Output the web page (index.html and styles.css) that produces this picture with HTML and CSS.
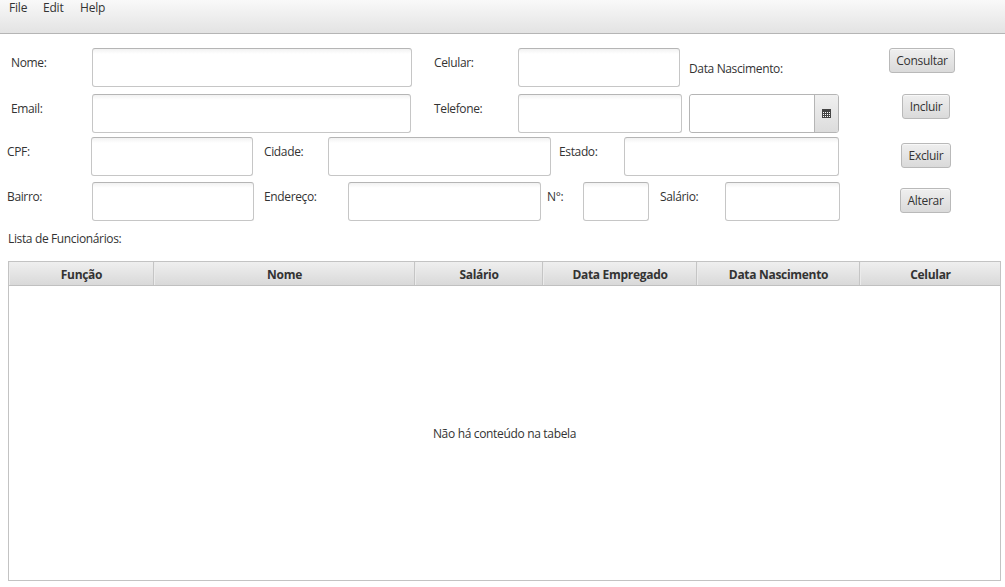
FILE: index.html
```html
<!DOCTYPE html>
<html lang="pt">
<head>
<meta charset="utf-8">
<title>Funcionários</title>
<link rel="stylesheet" href="styles.css">
</head>
<body>
<nav class="menu"><span class="menu-file">File</span><span class="menu-edit">Edit</span><span class="menu-help">Help</span></nav>
<main>
  <form class="form">
    <div class="fields">
      <div class="top">
        <div class="contact">
          <div class="row row-name"><label>Nome:</label><input type="text"><label class="second">Celular:</label><input type="text"></div>
          <div class="row row-email"><label>Email:</label><input type="text"><label class="second">Telefone:</label><input type="text"></div>
        </div>
        <div class="birth">
          <label class="birth-label">Data Nascimento:</label>
          <div class="picker">
            <input type="text">
            <span class="picker-button">
              <svg width="9" height="9" viewBox="0 0 9 9" shape-rendering="crispEdges"><path fill="#444" d="M0 0h9v9H0z"/><path fill="#fff" d="M1 3h1v1H1zM3 3h1v1H3zM5 3h1v1H5zM7 3h1v1H7zM1 5h1v1H1zM3 5h1v1H3zM5 5h1v1H5zM7 5h1v1H7zM1 7h1v1H1zM3 7h1v1H3zM5 7h1v1H5zM7 7h1v1H7z"/></svg>
            </span>
          </div>
        </div>
      </div>
      <div class="row row-city"><label>CPF:</label><input type="text"><label>Cidade:</label><input type="text"><label>Estado:</label><input type="text"></div>
      <div class="row row-address"><label>Bairro:</label><input type="text"><label>Endereço:</label><input type="text"><label>N°:</label><input type="text"><label>Salário:</label><input type="text"></div>
    </div>
    <div class="actions">
      <button type="button" class="consult">Consultar</button>
      <button type="button" class="include">Incluir</button>
      <button type="button" class="exclude">Excluir</button>
      <button type="button" class="alter">Alterar</button>
    </div>
  </form>
  <h2 class="list-title">Lista de Funcionários:</h2>
  <section class="table">
    <div class="head"><span>Função</span><span>Nome</span><span>Salário</span><span>Data Empregado</span><span>Data Nascimento</span><span>Celular</span></div>
    <div class="empty">Não há conteúdo na tabela</div>
  </section>
</main>
</body>
</html>
```
FILE: styles.css
```css
* { box-sizing: border-box; }
body {
  margin: 0;
  height: 587px;
  overflow: hidden;
  background: #fff;
  color: #333;
  font: 12px/16px "Open Sans", "Noto Sans", sans-serif;
  letter-spacing: -0.36px;
}
.menu {
  display: grid;
  grid-template-columns: 34px 37px auto;
  height: 34px;
  padding-left: 9px;
  border-bottom: 1px solid #b5b5b5;
  background: linear-gradient(#f9f9f9, #e3e3e3);
  letter-spacing: -0.2px;
}
.form {
  display: flex;
  justify-content: space-between;
  padding: 14px 50px 0 0;
}
.top { display: flex; gap: 7px; height: 89px; }
.contact { width: 682px; display: flex; flex-direction: column; gap: 7px; }
.row { display: grid; height: 39px; }
.row label { padding-top: 7px; white-space: nowrap; }
.row-name { grid-template-columns: 81px 320px 106px 162px; padding-left: 11px; }
.row-email { grid-template-columns: 81px 319px 107px 164px; padding-left: 11px; }
.row-name .second { padding-left: 22px; }
.row-email .second { padding-left: 23px; }
.row-city { grid-template-columns: 84px 173px 64px 231px 65px 215px; padding-left: 7px; }
.row-city input:nth-of-type(1) { width: 162px; }
.row-city input:nth-of-type(2) { width: 223px; }
.row-address { grid-template-columns: 85px 172px 84px 199px 36px 77px 65px 115px; padding-left: 7px; margin-top: 6px; }
.row-address input:nth-of-type(1) { width: 162px; }
.row-address input:nth-of-type(2) { width: 193px; }
.row-address input:nth-of-type(3) { width: 66px; }
input {
  width: 100%;
  height: 39px;
  margin: 0;
  padding: 4px 7px;
  border: 1px solid #c6c6c6;
  border-top-color: #b5b5b5;
  border-radius: 3px;
  background: linear-gradient(#f2f2f2, #fff 5px);
  font: inherit;
}
.birth { display: flex; flex-direction: column; width: 150px; }
.birth-label { height: 46px; padding-top: 13px; }
.picker {
  display: flex;
  height: 39px;
  border: 1px solid #b5b5b5;
  border-radius: 3px;
  overflow: hidden;
}
.picker input { flex: 1; min-width: 0; height: 37px; border: 0; background: #fff; }
.picker-button {
  display: flex;
  align-items: center;
  justify-content: center;
  width: 24px;
  border-left: 1px solid #b5b5b5;
  background: linear-gradient(#f0f0f0, #dcdcdc);
}
.actions { display: flex; flex-direction: column; width: 66px; }
button {
  height: 25px;
  padding: 1px 0 0;
  border: 1px solid #b9b9b9;
  border-radius: 3px;
  background: linear-gradient(#efefef, #dadada);
  box-shadow: inset 0 1px #f8f8f8;
  color: #333;
  font: inherit;
  letter-spacing: -0.3px;
}
.consult { width: 66px; }
.include { width: 48px; margin: 21px 0 0 13px; }
.exclude { width: 50px; margin: 24px 0 0 12px; }
.alter { width: 51px; margin: 20px 0 0 11px; }
.list-title { margin: 10px 0 0 8px; font-size: inherit; font-weight: 400; }
.table {
  display: flex;
  flex-direction: column;
  width: 993px;
  height: 320px;
  margin: 14px 0 0 8px;
  border: 1px solid #c3c3c3;
}
.head {
  display: grid;
  grid-template-columns: 145px 261px 128px 154px 163px 1fr;
  height: 24px;
  border-bottom: 1px solid #c0c0c0;
  background: linear-gradient(#efefef, #d9d9d9);
  font-weight: 700;
  line-height: 25px;
  letter-spacing: -0.3px;
  text-align: center;
}
.head span { height: 23px; padding-left: 1px; border-right: 1px solid #c5c5c5; box-shadow: inset 1px 0 #ebebeb; }
.head span:last-child { border-right: 0; }
.empty { flex: 1; display: flex; align-items: center; justify-content: center; padding-top: 2px; letter-spacing: -0.33px; }
```
